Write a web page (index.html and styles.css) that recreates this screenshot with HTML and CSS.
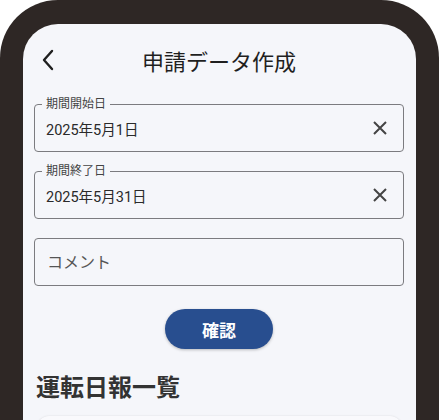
FILE: index.html
```html
<!DOCTYPE html>
<html lang="ja">
<head>
  <meta charset="UTF-8">
  <meta name="viewport" content="width=device-width, initial-scale=1.0">
  <title>申請データ作成</title>
  <link rel="stylesheet" href="styles.css">
</head>
<body>
  <div class="phone">
    <div class="screen">
      <header class="app-bar">
        <button class="back" aria-label="戻る">
          <svg width="14" height="22" viewBox="0 0 14 22"><path d="M11 2 L3 11 L11 20" fill="none" stroke="#1f1f1f" stroke-width="2.4" stroke-linecap="round" stroke-linejoin="round"/></svg>
        </button>
        <h1 class="title">申請データ作成</h1>
        <span></span>
      </header>

      <form class="form">
        <div class="field">
          <label class="field-label">期間開始日</label>
          <span class="field-value">2025年5月1日</span>
          <button type="button" class="clear" aria-label="クリア">
            <svg width="14" height="14" viewBox="0 0 14 14"><path d="M1 1 L13 13 M13 1 L1 13" stroke="#444" stroke-width="2"/></svg>
          </button>
        </div>
        <div class="field">
          <label class="field-label">期間終了日</label>
          <span class="field-value">2025年5月31日</span>
          <button type="button" class="clear" aria-label="クリア">
            <svg width="14" height="14" viewBox="0 0 14 14"><path d="M1 1 L13 13 M13 1 L1 13" stroke="#444" stroke-width="2"/></svg>
          </button>
        </div>
        <div class="field">
          <input type="text" class="comment" placeholder="コメント">
        </div>
        <button type="submit" class="confirm">確認</button>
      </form>

      <h2 class="section-title">運転日報一覧</h2>
      <div class="report-card"></div>
    </div>
  </div>
</body>
</html>
```

FILE: styles.css
```css
body {
  margin: 0;
  background-color: #fff;
  font-family: Roboto, "Noto Sans CJK JP", sans-serif;
  overflow: hidden;
}
.phone {
  width: 439px;
  height: 420px;
  box-sizing: border-box;
  border: 23px solid #2e2725;
  border-top-width: 24px;
  border-bottom: none;
  border-radius: 58px 58px 0 0;
  background-color: #2e2725;
}
.screen {
  height: 100%;
  overflow: hidden;
  background-color: #f5f6fa;
  border-radius: 35px 35px 0 0;
  padding: 0 12px 0 11px;
}
.app-bar {
  height: 80px;
  display: grid;
  grid-template-columns: 48px 1fr 48px;
  align-items: center;
  padding-bottom: 8px;
  box-sizing: border-box;
}
.back {
  background: none;
  border: none;
  padding: 0 0 0 7px;
  display: flex;
  align-items: center;
  cursor: pointer;
}
.title {
  margin: 0;
  text-align: center;
  font-size: 22px;
  font-weight: 400;
  color: #1f1f1f;
}
.form {
  display: flex;
  flex-direction: column;
  gap: 19px;
}
.field {
  position: relative;
  height: 48px;
  box-sizing: border-box;
  border: 1px solid #7b7b7f;
  border-radius: 4px;
  display: flex;
  align-items: center;
  padding: 0 11px;
}
.field-label {
  position: absolute;
  left: 7px;
  top: -9px;
  padding: 0 4px;
  background-color: #f5f6fa;
  font-size: 12px;
  line-height: 16px;
  color: #444;
}
.field-value {
  flex: 1;
  font-size: 14.5px;
  color: #2a2a2a;
}
.clear {
  background: none;
  border: none;
  padding: 0;
  margin-right: 5px;
  display: flex;
  cursor: pointer;
}
.comment {
  flex: 1;
  border: none;
  background: none;
  outline: none;
  padding: 0 1px;
  font-family: inherit;
  font-size: 16px;
  color: #2a2a2a;
}
.comment::placeholder {
  color: #555;
}
.confirm {
  align-self: center;
  margin-top: 4px;
  width: 108px;
  height: 40px;
  border: none;
  border-radius: 20px;
  background-color: #284e8f;
  color: #fff;
  font-family: inherit;
  font-size: 17px;
  font-weight: 700;
  box-shadow: 0 1px 3px rgba(0, 0, 0, 0.25);
  cursor: pointer;
}
.section-title {
  margin: 23px 0 12px 2px;
  font-size: 24px;
  line-height: 32px;
  font-weight: 700;
  color: #333;
}
.report-card {
  margin: 0 2px 0 3px;
  height: 80px;
  background-color: #f9f9fc;
  border-radius: 12px;
  box-shadow: 0 0 2px rgba(0, 0, 0, 0.12);
}
```
